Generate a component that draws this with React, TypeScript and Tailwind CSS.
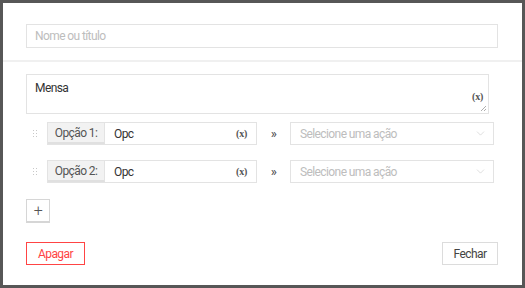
import { ChevronDown } from 'lucide-react';

const font = { fontFamily: 'Roboto, "Liberation Sans", sans-serif' };

function VarTag() {
  return (
    <span className="text-[10px] font-bold text-[#555] [font-family:'Liberation_Serif',serif] tracking-tight">
      (x)
    </span>
  );
}

function DragHandle() {
  return (
    <div className="grid grid-cols-2 gap-x-[2px] gap-y-[2px] w-[4px] mr-[10px] ml-[7px]">
      {Array.from({ length: 6 }).map((_, i) => (
        <span key={i} className="w-[1px] h-[1px] bg-[#c8c8c8]" />
      ))}
    </div>
  );
}

function OptionRow({ n }: { n: number }) {
  return (
    <div className="flex items-center h-[23px]">
      <DragHandle />
      <div className="flex h-full w-[210px] border border-[#e3e3e3]">
        <div className="flex items-center justify-center whitespace-nowrap bg-[#f2f2f2] border-r border-[#e3e3e3] border-b-2 border-b-[#e0e0e0] text-[#555] w-[57px] shrink-0">
          Opção {n}:
        </div>
        <div className="flex flex-1 items-center justify-between pl-[9px] pr-[9px] text-[#333]">
          <span>Opc</span>
          <VarTag />
        </div>
      </div>
      <span className="w-[33px] text-center text-[13px] text-[#444]">»</span>
      <div className="flex h-full w-[204px] items-center justify-between border border-[#e3e3e3] pl-[9px] pr-[6px] text-[#bdbdbd]">
        <span>Selecione uma ação</span>
        <ChevronDown size={13} strokeWidth={1} className="text-[#c4c4c4]" />
      </div>
    </div>
  );
}

export default function App() {
  return (
    <div style={font} className="w-[525px] h-[288px] border-[3px] border-[#575757] bg-white flex flex-col text-[12px] tracking-[-0.6px]">
      <div className="px-[23px] pt-[21px] pb-[12px]">
        <div className="h-[24px] w-[472px] border border-[#e3e3e3] flex items-center px-[8px] text-[#bdbdbd]">
          Nome ou título
        </div>
      </div>
      <div className="h-[2px] bg-[#f0f0f0]" />
      <div className="px-[23px] pt-[12px] flex flex-col">
        <div className="relative h-[40px] w-[463px] border border-[#e3e3e3] px-[8px] pt-[4px] text-[#333]">
          Mensa
          <span className="absolute right-[5px] top-[12px]">
            <VarTag />
          </span>
          <svg className="absolute right-[1px] bottom-[1px]" width="7" height="7" viewBox="0 0 7 7">
            <path d="M1 6 L6 1 M4 6 L6 4" stroke="#999" strokeWidth="0.8" />
          </svg>
        </div>
        <div className="mt-[8px]">
          <OptionRow n={1} />
        </div>
        <div className="mt-[15px]">
          <OptionRow n={2} />
        </div>
        <button className="mt-[16px] w-[24px] h-[24px] border border-[#d6d6d6] border-b-2 flex items-center justify-center text-[16px] text-[#555] font-light leading-none">
          +
        </button>
        <div className="mt-[19px] flex justify-between w-[472px]">
          <button className="h-[23px] w-[59px] border border-[#f44] text-[#f44]">Apagar</button>
          <button className="h-[23px] w-[56px] border border-[#dcdcdc] text-[#444]">Fechar</button>
        </div>
      </div>
    </div>
  );
}
